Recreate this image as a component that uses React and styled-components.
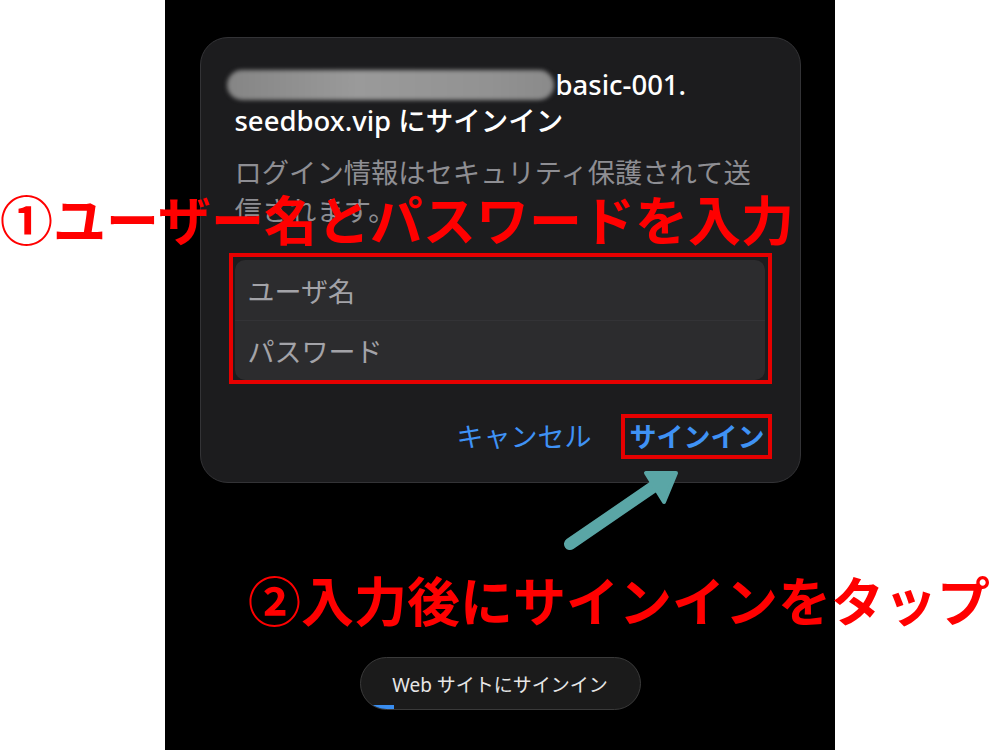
import styled, { createGlobalStyle } from "styled-components";

const GlobalStyle = createGlobalStyle`
  body {
    margin: 0;
    background: #fff;
    font-family: "Noto Sans", "Noto Sans CJK JP", sans-serif;
  }
`;

const Page = styled.div`
  position: relative;
  width: 1000px;
  height: 750px;
  overflow: hidden;
  background: #fff;
`;

const Screen = styled.div`
  width: 670px;
  height: 750px;
  margin: 0 auto;
  background: #000;
  display: flex;
  flex-direction: column;
  align-items: center;
`;

const Card = styled.div`
  box-sizing: border-box;
  width: 601px;
  margin-top: 37px;
  padding: 29px 35px 27px 34px;
  background: #1c1c1e;
  border: 1px solid #333336;
  border-radius: 28px;
`;

const Title = styled.div`
  color: #fff;
  font-size: 27.5px;
  font-weight: 500;
  line-height: 36px;
`;

const TitleRow = styled.div`
  display: flex;
  align-items: center;
  margin-left: -8px;
`;

const Blurred = styled.span`
  display: inline-block;
  width: 327px;
  height: 30px;
  margin-right: 2px;
  border-radius: 15px;
  background: linear-gradient(90deg, #858585, #9a9a9a 40%, #929292 80%, #8a8a8a);
  filter: blur(2px);
`;

const Description = styled.p`
  margin: 15px 0 0;
  color: #8e8e93;
  font-size: 27.3px;
  line-height: 38px;
`;

const FieldGroup = styled.div`
  margin-top: 30px;
  background: #2c2c2e;
  border-radius: 10px;
  overflow: hidden;
`;

const Field = styled.div`
  height: 60px;
  display: flex;
  align-items: center;
  padding-left: 13px;
  color: #a3a3a8;
  font-size: 27px;
  border-top: ${({ $first }) => ($first ? "none" : "1px solid #333336")};
  box-sizing: border-box;
`;

const Actions = styled.div`
  display: flex;
  justify-content: flex-end;
  gap: 38px;
  margin-top: 39px;
`;

const ActionButton = styled.button`
  padding: 0;
  border: none;
  background: none;
  color: #3f92f5;
  font-family: inherit;
  font-size: 27px;
  line-height: 36px;
  font-weight: ${({ $primary }) => ($primary ? 700 : 400)};
`;

const Toast = styled.div`
  position: relative;
  box-sizing: border-box;
  width: 281px;
  height: 53px;
  margin-top: auto;
  margin-bottom: 40px;
  display: flex;
  align-items: center;
  justify-content: center;
  background: #1b1b1b;
  border: 1px solid #3a3a3a;
  border-radius: 27px;
  overflow: hidden;
  color: #e6e6e6;
  font-size: 19px;
`;

const Progress = styled.div`
  position: absolute;
  left: 0;
  bottom: 0;
  height: 4px;
  background: #3a8ef0;
`;

const Annotation = styled.div`
  position: absolute;
  left: ${({ $left }) => $left}px;
  top: ${({ $top }) => $top}px;
  color: #ff0000;
  font-family: "Noto Sans CJK JP", sans-serif;
  font-size: 53px;
  font-weight: 700;
  line-height: 53px;
  white-space: nowrap;
`;

const Highlight = styled.div`
  position: absolute;
  box-sizing: border-box;
  left: ${({ $left }) => $left}px;
  top: ${({ $top }) => $top}px;
  width: ${({ $width }) => $width}px;
  height: ${({ $height }) => $height}px;
  border: 4px solid #e60000;
`;

const Arrow = styled.svg`
  position: absolute;
  left: 555px;
  top: 460px;
`;

export default function App() {
  return (
    <Page>
      <GlobalStyle />
      <Screen>
        <Card>
          <Title>
            <TitleRow>
              <Blurred />
              <span>basic-001.</span>
            </TitleRow>
            <div>seedbox.vip にサインイン</div>
          </Title>
          <Description>ログイン情報はセキュリティ保護されて送信されます。</Description>
          <FieldGroup>
            <Field $first>ユーザ名</Field>
            <Field>パスワード</Field>
          </FieldGroup>
          <Actions>
            <ActionButton>キャンセル</ActionButton>
            <ActionButton $primary>サインイン</ActionButton>
          </Actions>
        </Card>
        <Toast>
          Web サイトにサインイン
          <Progress style={{ width: 33 }} />
        </Toast>
      </Screen>

      <Highlight $left={229} $top={253} $width={543} $height={131} />
      <Highlight $left={621} $top={414} $width={151} $height={45} />
      <Annotation $left={0} $top={192}>①ユーザー名とパスワードを入力</Annotation>
      <Annotation $left={248} $top={573}>②入力後にサインインをタップ</Annotation>
      <Arrow width="135" height="100" viewBox="555 460 135 100">
        <line x1="570" y1="544" x2="656" y2="485" stroke="#5aa6a6" strokeWidth="12" strokeLinecap="round" />
        <polygon points="646,473 676,473 664,502" fill="#5aa6a6" stroke="#5aa6a6" strokeWidth="4" strokeLinejoin="round" />
      </Arrow>
    </Page>
  );
}
